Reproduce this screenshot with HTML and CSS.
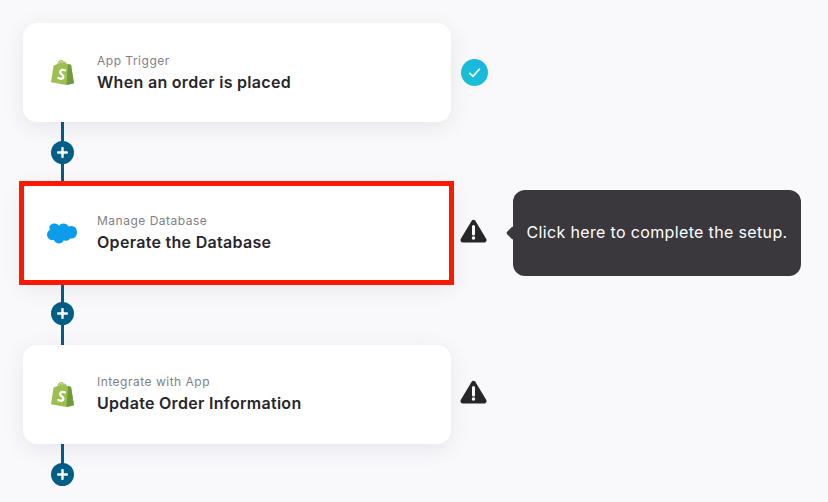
FILE: index.html
```html
<!DOCTYPE html>
<html lang="en">
<head>
    <meta charset="UTF-8">
    <meta name="viewport" content="width=device-width, initial-scale=1.0">
    <title>Flow</title>
    <link rel="stylesheet" href="styles.css">
</head>
<body>
    <svg class="icon-defs" width="0" height="0" aria-hidden="true">
        <defs>
            <linearGradient id="check-fill" x1="0" y1="1" x2="1" y2="0">
                <stop offset="0" stop-color="#1cc4cf"/>
                <stop offset="1" stop-color="#19b2e6"/>
            </linearGradient>
            <symbol id="shopify" viewBox="0 0 24 27">
                <path d="M1 23.200 3.600 6.400C5 5.900 6.200 5.500 7.200 5.200 8 2.600 9.500 1 11.400 1c1 0 1.600.5 2 1.200 1.500-.2 2.800 1 3.300 2.800l1.300-.3 1 .9 2 .2L24 24.200 16.500 26Z" fill="#9cbf4f"/>
                <path d="M18 4.700 19 5.600l2 .2L24 24.200 16.500 26Z" fill="#6f9b3f"/>
                <path d="M8.800 5c.5-2 1.500-3 2.800-3M12.200 4.300c0-1-.2-1.800-.6-2.300M14.300 3.700c-.1-.8-.3-1.200-.7-1.600" fill="none" stroke="#e4edcf" stroke-width=".8"/>
                <path d="M14.800 11.300c-1.200-.7-4.300-.8-4.600 1.700-.2 2.300 3.500 2.500 3.200 5-.2 2-2.900 2.100-5 1" fill="none" stroke="#fff" stroke-width="2.400" stroke-linecap="round"/>
            </symbol>
            <symbol id="warning" viewBox="0 0 27 24">
                <path d="M13.500 3.500 24 21H3Z" fill="#27262b" stroke="#27262b" stroke-width="5" stroke-linejoin="round"/>
                <path d="M13.500 7.500v7.500" stroke="#fff" stroke-width="3" stroke-linecap="round"/>
                <circle cx="13.500" cy="19" r="1.700" fill="#fff"/>
            </symbol>
        </defs>
    </svg>

    <div class="flow">
        <div class="step">
            <div class="card">
                <svg class="app-icon"><use href="#shopify"/></svg>
                <div class="card-text">
                    <div class="card-label">App Trigger</div>
                    <div class="card-title">When an order is placed</div>
                </div>
            </div>
            <svg class="status status-ok" viewBox="0 0 27 27">
                <circle cx="13.500" cy="13.500" r="13.500" fill="url(#check-fill)"/>
                <path d="M8.200 13.800 12 17.300 18.800 9.800" fill="none" stroke="#fff" stroke-width="1.700"/>
            </svg>
        </div>

        <div class="connector">
            <span class="add-btn"><svg viewBox="0 0 11 11"><path d="M5.500 1v9M1 5.500h9" stroke="#fff" stroke-width="2.400" stroke-linecap="round"/></svg></span>
        </div>

        <div class="step">
            <div class="card card-active">
                <svg class="app-icon-cloud" viewBox="0 0 32 22">
                    <path d="M13 3.200C14.200 1.800 15.800 1 17.500 1c2.200 0 4.100 1.200 5 3 .9-.4 1.800-.6 2.800-.6 3.600 0 5.700 2.900 5.700 6.300s-2.200 6.300-5.700 6.300c-.4 0-.9 0-1.300-.1-.8 1.400-2.400 2.400-4.100 2.400-.7 0-1.400-.2-2-.5-.8 2-2.700 3.200-4.900 3.200-2.300 0-4.300-1.400-5-3.400-.3.1-.7.100-1 .1C4 18.100 1 15.500 1 12.300c0-2.200 1.200-4 2.900-5-.3-.7-.5-1.500-.5-2.300C3.400 2.800 5.800 1 8.500 1c1.800 0 3.400.9 4.500 2.200Z" fill="#0b9cec"/>
                </svg>
                <div class="card-text">
                    <div class="card-label">Manage Database</div>
                    <div class="card-title">Operate the Database</div>
                </div>
            </div>
            <svg class="status status-warn"><use href="#warning"/></svg>
            <div class="tooltip">Click here to complete the setup.</div>
        </div>

        <div class="connector">
            <span class="add-btn"><svg viewBox="0 0 11 11"><path d="M5.500 1v9M1 5.500h9" stroke="#fff" stroke-width="2.400" stroke-linecap="round"/></svg></span>
        </div>

        <div class="step">
            <div class="card">
                <svg class="app-icon"><use href="#shopify"/></svg>
                <div class="card-text">
                    <div class="card-label">Integrate with App</div>
                    <div class="card-title">Update Order Information</div>
                </div>
            </div>
            <svg class="status status-warn"><use href="#warning"/></svg>
        </div>

        <div class="connector connector-end">
            <span class="add-btn"><svg viewBox="0 0 11 11"><path d="M5.500 1v9M1 5.500h9" stroke="#fff" stroke-width="2.400" stroke-linecap="round"/></svg></span>
        </div>
    </div>
</body>
</html>
```

FILE: styles.css
```css
html, body {
    height: 100%;
}

body {
    margin: 0;
    overflow: hidden;
    background-color: #f9f8fb;
    color: #27262b;
    font-family: 'Inter', 'Liberation Sans', sans-serif;
}

.icon-defs {
    position: absolute;
}

.flow {
    padding: 23px 0 0 23px;
}

.step {
    position: relative;
    display: flex;
    align-items: center;
    gap: 10px;
}

.card {
    position: relative;
    box-sizing: border-box;
    width: 428px;
    height: 99px;
    display: flex;
    align-items: center;
    padding-left: 27px;
    background: white;
    border-radius: 14px;
    box-shadow: 0 5px 22px rgba(40, 40, 70, 0.09);
}

/* red frame sits a bit outside the card */
.card-active {
    border-radius: 0;
}

.card-active::after {
    content: '';
    position: absolute;
    top: -3px;
    left: -4px;
    right: -3px;
    bottom: -2px;
    border: 5px solid #fb1a00;
}

.app-icon {
    width: 24px;
    height: 27px;
    flex: none;
    margin-right: 23px;
}

.app-icon-cloud {
    width: 32px;
    height: 23px;
    flex: none;
    margin: 0 19px 0 -4px;
}

.card-text {
    display: flex;
    flex-direction: column;
    gap: 4px;
    margin-top: -1px;
}

.connector + .step .card-text {
    margin-top: -3px;
}

.card-label {
    font-size: 12px;
    line-height: 15px;
    letter-spacing: 0.5px;
    color: #7f7f88;
}

.card-title {
    font-size: 16px;
    line-height: 20px;
    font-weight: 600;
    letter-spacing: 0.3px;
    color: #27262b;
}

.status {
    flex: none;
    width: 27px;
    height: 27px;
}

.status-warn {
    height: 24px;
    margin: 0 0 5px -1px;
}

.connector {
    width: 80px;
    height: 62px;
    margin-left: -1px;
    display: flex;
    align-items: center;
    justify-content: center;
    background: linear-gradient(#025e85, #025e85) center / 3px 100% no-repeat;
}

/* last connector stops at its button */
.connector-end {
    background-position: top;
    background-size: 3px 50%;
}

.add-btn {
    width: 23px;
    height: 23px;
    margin-bottom: 1px;
    border-radius: 50%;
    background-color: #025e85;
    display: flex;
    align-items: center;
    justify-content: center;
}

.add-btn svg {
    width: 11px;
    height: 11px;
}

.tooltip {
    position: absolute;
    left: 490px;
    top: 6px;
    box-sizing: border-box;
    width: 288px;
    height: 86px;
    padding-bottom: 2px;
    display: flex;
    align-items: center;
    justify-content: center;
    background-color: #3a383d;
    border-radius: 12px;
    color: white;
    font-size: 16px;
    letter-spacing: 0.35px;
}

.tooltip::before {
    content: '';
    position: absolute;
    left: -5px;
    top: 38px;
    width: 10px;
    height: 10px;
    background-color: #3a383d;
    border-radius: 2px;
    transform: rotate(45deg);
}
```
